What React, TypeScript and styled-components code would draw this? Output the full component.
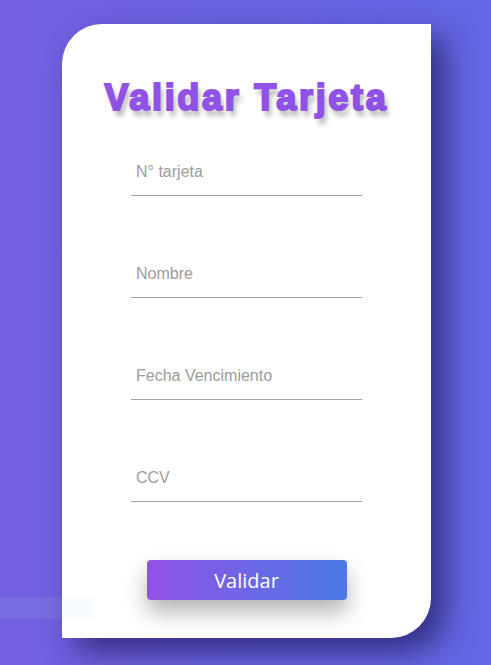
import { createGlobalStyle, styled } from "styled-components";

const GlobalStyle = createGlobalStyle`
  html, body {
    margin: 0;
    padding: 0;
  }
  body {
    background: linear-gradient(90deg, #7360e0 0%, #6a63e2 50%, #6367e4 100%);
    min-height: 665px;
    overflow: hidden;
  }
`;

const fields = ["N° tarjeta", "Nombre", "Fecha Vencimiento", "CCV"];

function App() {
  return (
    <Page>
      <GlobalStyle />
      <Card>
        <Title>Validar Tarjeta</Title>
        <Form onSubmit={(e) => e.preventDefault()}>
          {fields.map((f) => (
            <Input key={f} type="text" placeholder={f} />
          ))}
          <Button type="submit">Validar</Button>
        </Form>
      </Card>
      <Strip />
    </Page>
  );
}

export default App;

const Page = styled.div`
  position: relative;
  min-height: 665px;
  padding: 24px 0 0 62px;
  box-sizing: border-box;
`;

const Card = styled.div`
  width: 369px;
  height: 614px;
  background: #ffffff;
  border-radius: 40px 0 40px 0;
  box-shadow: 14px 14px 30px rgba(30, 25, 90, 0.7);
  display: flex;
  flex-direction: column;
  align-items: center;
  box-sizing: border-box;
  padding-top: 52px;
`;

const Title = styled.h1`
  margin: 0;
  font-family: "Liberation Sans", Arial, sans-serif;
  font-weight: 900;
  font-size: 36px;
  line-height: 44px;
  color: #9052e6;
  -webkit-text-stroke: 2px #9052e6;
  letter-spacing: 2.7px;
  text-shadow: 3px 6px 5px rgba(0, 0, 0, 0.3);
`;

const Form = styled.form`
  display: flex;
  flex-direction: column;
  align-items: center;
  margin-top: 29px;
`;

const Input = styled.input`
  width: 231px;
  height: 47px;
  box-sizing: border-box;
  border: none;
  border-bottom: 1px solid #a3a3a3;
  outline: none;
  padding: 0 5px;
  margin-bottom: 55px;
  font-family: "Liberation Sans", Arial, sans-serif;
  font-size: 16px;
  color: #555;
  background: transparent;

  &::placeholder {
    color: #9c9c9c;
  }
`;

const Button = styled.button`
  width: 200px;
  height: 40px;
  margin-top: 3px;
  border: none;
  border-radius: 4px;
  background: linear-gradient(90deg, #9152e6 0%, #4a7ae6 100%);
  color: #ffffff;
  font-family: "Open Sans", "Noto Sans", sans-serif;
  font-size: 20px;
  cursor: pointer;
  box-shadow: 0 12px 22px rgba(0, 0, 0, 0.3);
`;

const Strip = styled.div`
  position: absolute;
  left: 0;
  top: 597px;
  width: 93px;
  height: 22px;
  background: rgba(165, 215, 240, 0.1);
`;
